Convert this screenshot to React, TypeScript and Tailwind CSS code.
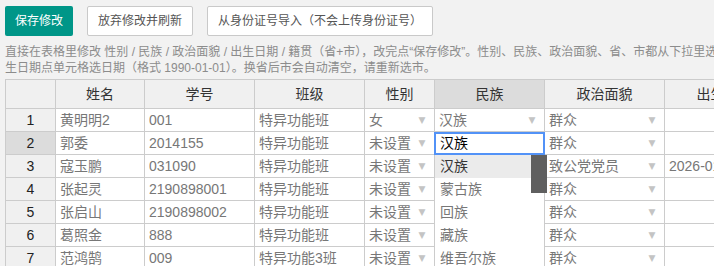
import React from "react";

const widths = ["w-[51px] border-l", "w-[89px]", "w-[110px]", "w-[110px]", "w-[70px]", "w-[110px]", "w-[120px]", "w-[120px]", "w-[120px]"];
const headers = ["", "姓名", "学号", "班级", "性别", "民族", "政治面貌", "出生日期", "籍贯"];

type Row = { n: string; name: string; id: string; cls: string; sex: string; nation: string; party: string; birth: string };

const rows: Row[] = [
  { n: "1", name: "黄明明2", id: "001", cls: "特异功能班", sex: "女", nation: "汉族", party: "群众", birth: "" },
  { n: "2", name: "郭委", id: "2014155", cls: "特异功能班", sex: "未设置", nation: "汉族", party: "群众", birth: "" },
  { n: "3", name: "寇玉鹏", id: "031090", cls: "特异功能班", sex: "未设置", nation: "", party: "致公党党员", birth: "2026-01-01" },
  { n: "4", name: "张起灵", id: "2190898001", cls: "特异功能班", sex: "未设置", nation: "", party: "群众", birth: "" },
  { n: "5", name: "张启山", id: "2190898002", cls: "特异功能班", sex: "未设置", nation: "", party: "群众", birth: "" },
  { n: "6", name: "葛照金", id: "888", cls: "特异功能班", sex: "未设置", nation: "", party: "群众", birth: "" },
  { n: "7", name: "范鸿鹄", id: "009", cls: "特异功能3班", sex: "未设置", nation: "", party: "群众", birth: "" },
];

function Arrow() {
  return <span className="w-[16px] shrink-0 text-center text-[9px] text-[#c4c4c4] font-['DejaVu_Sans',sans-serif]">▼</span>;
}

function Cell({ i, children, arrow }: { i: number; children?: React.ReactNode; arrow?: boolean }) {
  return (
    <div className={`${widths[i]} shrink-0 h-[23px] border-r border-b border-[#ccc] bg-white flex items-center pl-[4px] pr-[4px] text-[14px] leading-[22px] text-[#777] whitespace-nowrap overflow-hidden`}>
      <span className="flex-1 overflow-hidden">{children}</span>
      {arrow ? <Arrow /> : null}
    </div>
  );
}

export default function App() {
  return (
    <div className="w-full h-[266px] overflow-hidden bg-[#f2f2f2] font-['Liberation_Sans','Noto_Sans_CJK_SC',sans-serif]">
      <div className="w-[1100px] pl-[5px] pt-[6px]">
        <div className="flex gap-[14px] h-[30px]">
          <button className="h-[30px] px-[10px] rounded-[2px] bg-[#009688] text-white text-[12px] leading-[30px]">保存修改</button>
          <button className="h-[30px] px-[10px] rounded-[2px] bg-white border border-[#c9c9c9] text-[#555] text-[12px] leading-[28px]">放弃修改并刷新</button>
          <button className="h-[30px] px-[10px] rounded-[2px] bg-white border border-[#c9c9c9] text-[#555] text-[12px] leading-[28px]">从身份证号导入（不会上传身份证号）</button>
        </div>
        <div className="mt-2 text-[12px] leading-4 text-[#8c8c8c] whitespace-nowrap">
          <div>直接在表格里修改 性别 / 民族 / 政治面貌 / 出生日期 / 籍贯（省+市），改完点“保存修改”。性别、民族、政治面貌、省、市都从下拉里选，出</div>
          <div>生日期点单元格选日期（格式 1990-01-01）。换省后市会自动清空，请重新选市。</div>
        </div>
        <div className="relative mt-[3px]">
          <div className="flex">
            {headers.map((h, i) => (
              <div
                key={i}
                className={`${widths[i]} shrink-0 h-[30px] border-t border-r border-b border-[#ccc] ${i === 5 ? "bg-[#dcdcdc]" : "bg-[#f0f0f0]"} flex items-center justify-center text-[14px] text-[#333]`}
              >
                {h}
              </div>
            ))}
          </div>
          {rows.map((r, ri) => (
            <div key={ri} className="flex">
              <div className={`${widths[0]} shrink-0 h-[23px] border-r border-b border-[#ccc] ${ri === 1 ? "bg-[#dcdcdc]" : "bg-[#f0f0f0]"} flex items-center justify-center text-[14px] text-[#222]`}>
                {r.n}
              </div>
              <Cell i={1}>{r.name}</Cell>
              <Cell i={2}>{r.id}</Cell>
              <Cell i={3}>{r.cls}</Cell>
              <Cell i={4} arrow>{r.sex}</Cell>
              <Cell i={5} arrow={ri === 0}>{r.nation}</Cell>
              <Cell i={6} arrow>{r.party}</Cell>
              <Cell i={7}>{r.birth}</Cell>
              <Cell i={8} arrow></Cell>
            </div>
          ))}
          <div className="absolute left-[429px] top-[53px] w-[111px] h-[23px] border-2 border-[#5292f7] bg-white pl-[4px] text-[14px] leading-[19px] text-black">
            汉族
          </div>
          <div className="absolute left-[429px] top-[76px] w-[110px] h-[140px] overflow-hidden bg-white border-l border-[#ccc]">
            {["汉族", "蒙古族", "回族", "藏族", "维吾尔族", "苗族"].map((t, i) => (
              <div key={t} className={`h-[23px] leading-[23px] pl-[5px] text-[14px] ${i === 0 ? "bg-[#ebebeb] text-[#333]" : "text-[#777]"}`}>
                {t}
              </div>
            ))}
          </div>
          <div className="absolute left-[526px] top-[76px] w-[16px] h-[38px] bg-[#5f5f5f]"></div>
        </div>
      </div>
    </div>
  );
}
